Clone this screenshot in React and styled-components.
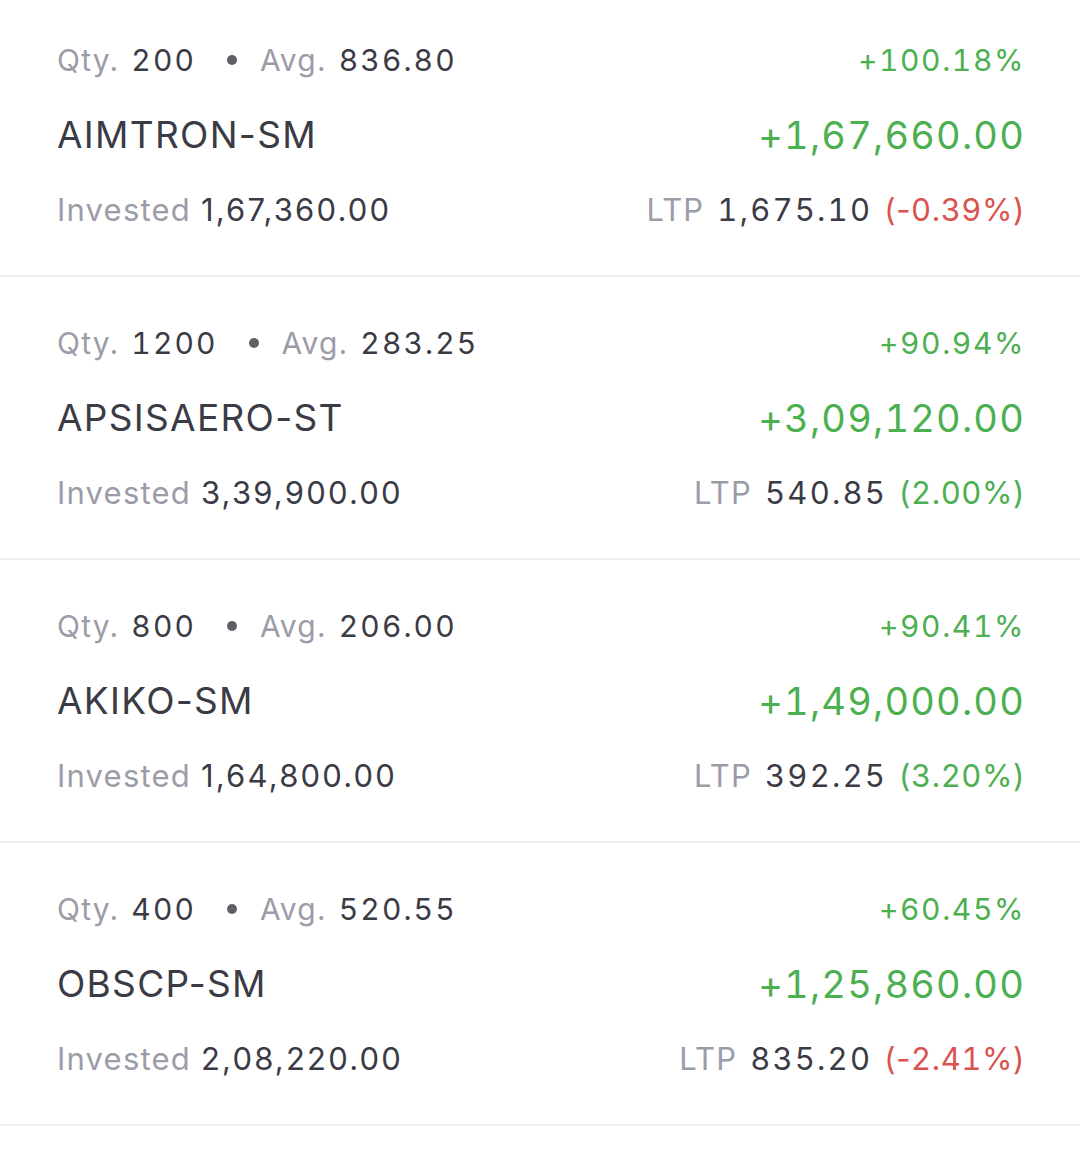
import React from "react";
import styled, { createGlobalStyle } from "styled-components";

const Global = createGlobalStyle`
  html, body { margin: 0; padding: 0; background: #ffffff; }
  body { font-family: Inter, "Noto Sans", sans-serif; -webkit-font-smoothing: antialiased; }
`;

const Page = styled.div`
  width: 1080px;
  height: 1168px;
  overflow: hidden;
  display: flex;
  flex-direction: column;
  background: #fff;
`;

const List = styled.div`
  display: flex;
  flex-direction: column;
  margin-top: -6px;
`;

const Row = styled.div`
  display: grid;
  grid-template-columns: 1fr auto;
  grid-auto-rows: 75px;
  align-items: center;
  padding: 28px 55px 28px 57px;
  border-bottom: 2px solid #eeeef0;
`;

const Cell = styled.div`
  display: flex;
  align-items: center;
  justify-content: ${(p) => (p.$right ? "flex-end" : "flex-start")};
  white-space: nowrap;
  font-size: ${(p) => p.$size || 30}px;
  letter-spacing: ${(p) => p.$ls ?? 1.2}px;
  color: #3b3b45;
`;

const Label = styled.span`
  color: #9c9ca8;
  margin-right: ${(p) => p.$gap ?? 11}px;
`;

const Num = styled.span`
  font-variant-numeric: ${(p) => (p.$tab ? "tabular-nums" : "normal")};
  letter-spacing: ${(p) => p.$ls ?? 1.2}px;
  color: ${(p) => (p.$tone === "neg" ? "#d9534f" : p.$tone === "pos" ? "#4caf50" : "#3b3b45")};
  margin-left: ${(p) => p.$ml ?? 0}px;
`;

const Digits = styled.span`
  font-variant-numeric: tabular-nums;
`;

const Dot = styled.span`
  display: inline-block;
  width: 10px;
  height: 10px;
  border-radius: 50%;
  background: #5f5f66;
  margin: 0 23px 0 31px;
`;

const Spacer = styled.div`
  flex: 1;
`;

const BottomBar = styled.div`
  height: 6px;
  flex: none;
  border-top: 1px solid #e6e6e8;
  box-shadow: 0 -8px 10px rgba(0, 0, 0, 0.035);
  background: #fff;
`;

const holdings = [
  { qty: "200", avg: "836.80", pct: "+100.18%", name: "AIMTRON-SM", pnl: "+1,67,660.00", inv: "1,67,360.00", ltp: "1,675.10", chg: "-0.39", neg: true },
  { qty: "1200", avg: "283.25", pct: "+90.94%", name: "APSISAERO-ST", pnl: "+3,09,120.00", inv: "3,39,900.00", ltp: "540.85", chg: "2.00", neg: false },
  { qty: "800", avg: "206.00", pct: "+90.41%", name: "AKIKO-SM", pnl: "+1,49,000.00", inv: "1,64,800.00", ltp: "392.25", chg: "3.20", neg: false },
  { qty: "400", avg: "520.55", pct: "+60.45%", name: "OBSCP-SM", pnl: "+1,25,860.00", inv: "2,08,220.00", ltp: "835.20", chg: "-2.41", neg: true },
];

function Change({ value, neg }) {
  const sign = value.startsWith("-") ? "-" : "";
  const digits = value.replace(/^-/, "");
  return (
    <Num $ls={0.6} $ml={12} $tone={neg ? "neg" : "pos"}>
      ({sign}
      <Digits>{digits}</Digits>%)
    </Num>
  );
}

export default function App() {
  return (
    <>
      <Global />
      <Page>
        <List>
          {holdings.map((h) => (
            <Row key={h.name}>
              <Cell>
                <Label $gap={12}>Qty.</Label>
                <Num $tab $ls={2.1}>{h.qty}</Num>
                <Dot />
                <Label $gap={12}>Avg.</Label>
                <Num $tab $ls={2.1}>{h.avg}</Num>
              </Cell>
              <Cell $right>
                <Num $tab $ls={1.6} $tone="pos">{h.pct}</Num>
              </Cell>
              <Cell $size={37} $ls={1.3}>{h.name}</Cell>
              <Cell $right $size={38}>
                <Num $tab $ls={1.2} $tone="pos">{h.pnl}</Num>
              </Cell>
              <Cell $size={31}>
                <Label $gap={10}>Invested</Label>
                <Num $ls={2.2}>{h.inv}</Num>
              </Cell>
              <Cell $right $size={31}>
                <Label $gap={13}>LTP</Label>
                <Num $tab $ls={2.2}>{h.ltp}</Num>
                <Change value={h.chg} neg={h.neg} />
              </Cell>
            </Row>
          ))}
          <Row />
        </List>
        <Spacer />
        <BottomBar />
      </Page>
    </>
  );
}
